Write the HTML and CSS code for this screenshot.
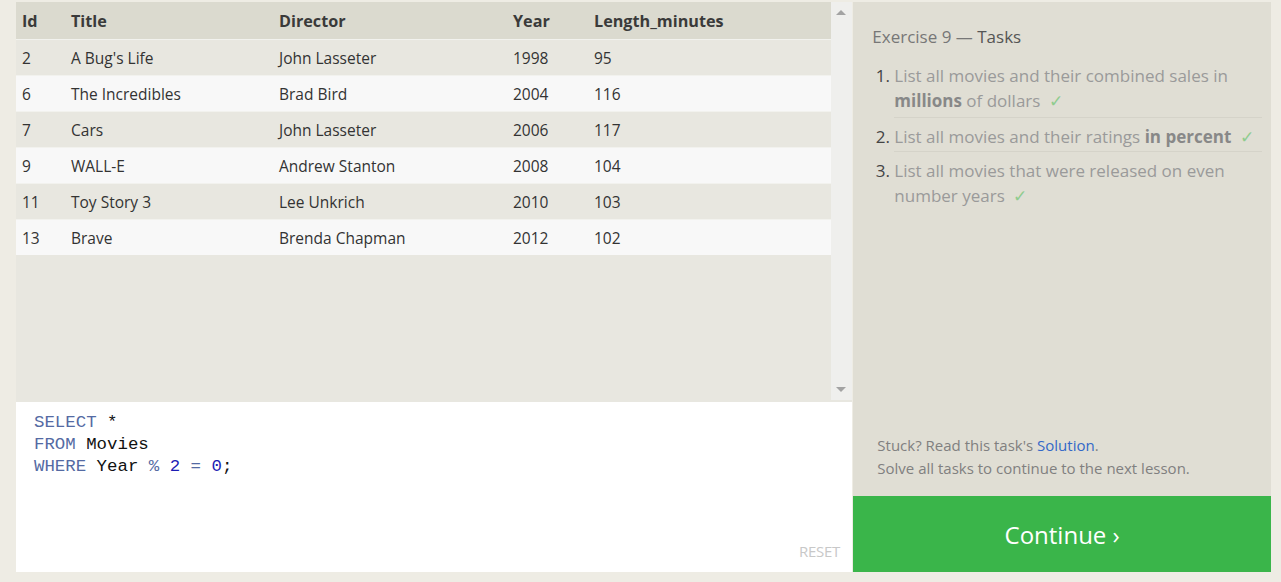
FILE: index.html
```html
<!DOCTYPE html>
<html lang="en">
<head>
<meta charset="utf-8">
<title>SQL Lesson</title>
<link rel="stylesheet" href="styles.css">
</head>
<body>
<div class="page">
  <div class="left">
    <div class="results">
      <div class="table-wrap">
        <table class="grid">
          <colgroup>
            <col class="c-id"><col class="c-title"><col class="c-dir"><col class="c-year"><col class="c-len">
          </colgroup>
          <thead>
            <tr><th>Id</th><th>Title</th><th>Director</th><th>Year</th><th>Length_minutes</th></tr>
          </thead>
          <tbody>
            <tr><td>2</td><td>A Bug's Life</td><td>John Lasseter</td><td>1998</td><td>95</td></tr>
            <tr><td>6</td><td>The Incredibles</td><td>Brad Bird</td><td>2004</td><td>116</td></tr>
            <tr><td>7</td><td>Cars</td><td>John Lasseter</td><td>2006</td><td>117</td></tr>
            <tr><td>9</td><td>WALL-E</td><td>Andrew Stanton</td><td>2008</td><td>104</td></tr>
            <tr><td>11</td><td>Toy Story 3</td><td>Lee Unkrich</td><td>2010</td><td>103</td></tr>
            <tr><td>13</td><td>Brave</td><td>Brenda Chapman</td><td>2012</td><td>102</td></tr>
          </tbody>
        </table>
      </div>
      <div class="scrollbar">
        <span class="arrow up"></span>
        <span class="arrow down"></span>
      </div>
    </div>
    <div class="editor">
      <pre class="code"><span class="kw">SELECT</span> *
<span class="kw">FROM</span> Movies
<span class="kw">WHERE</span> Year <span class="op">%</span> <span class="num">2</span> <span class="op">=</span> <span class="num">0</span>;</pre>
      <div class="reset">RESET</div>
    </div>
  </div>
  <div class="right">
    <div class="tasks">
      <h2 class="tasks-title">Exercise 9 — <span class="dark">Tasks</span></h2>
      <ol class="task-list">
        <li><span class="task-text">List all movies and their combined sales in <b>millions</b> of dollars</span> <span class="check">✓</span></li>
        <li><span class="task-text">List all movies and their ratings <b>in percent</b></span> <span class="check">✓</span></li>
        <li><span class="task-text">List all movies that were released on even number years</span> <span class="check">✓</span></li>
      </ol>
      <div class="help">
        <p>Stuck? Read this task's <a class="link">Solution</a>.</p>
        <p>Solve all tasks to continue to the next lesson.</p>
      </div>
    </div>
    <div class="continue">Continue ›</div>
  </div>
</div>
</body>
</html>
```
FILE: styles.css
```css
html, body {
  margin: 0;
  padding: 0;
  background: #eeece4;
  font-family: "Open Sans", "Noto Sans", sans-serif;
}

.page {
  display: flex;
  height: 582px;
  box-sizing: border-box;
  padding: 2px 10px 10px 16px;
}

.left {
  width: 837px;
  display: flex;
  flex-direction: column;
}

.results {
  display: flex;
  height: 400px;
  background: #e8e7e0;
}

.table-wrap {
  width: 815px;
}

.grid {
  width: 815px;
  border-collapse: collapse;
  table-layout: fixed;
  font-size: 15.5px;
  color: #333;
}

.c-id { width: 49px; }
.c-title { width: 208px; }
.c-dir { width: 234px; }
.c-year { width: 81px; }
.c-len { width: 243px; }

.grid th {
  background: #dbdacf;
  height: 37px;
  padding: 0 6px;
  text-align: left;
  font-weight: 700;
  font-size: 16.2px;
  color: #3a3a3a;
}

.grid td {
  height: 35px;
  padding: 0 6px;
  text-align: left;
  white-space: nowrap;
}

.grid tbody tr:nth-child(odd) td { background: #e8e7e0; }
.grid tbody tr:nth-child(even) td { background: #f8f8f8; }
.grid tbody tr td { border-top: 1px solid #f2f2ee; }

.scrollbar {
  width: 21px;
  height: 398px;
  background: #efefed;
  display: flex;
  flex-direction: column;
  justify-content: space-between;
  align-items: center;
  padding: 8px 0;
  box-sizing: border-box;
}

.arrow {
  width: 0;
  height: 0;
  border-left: 5px solid transparent;
  border-right: 5px solid transparent;
}
.arrow.up { border-bottom: 5px solid #a3a3a3; margin-left: -1px; }
.arrow.down { border-top: 5px solid #a3a3a3; margin-left: -1px; }

.editor {
  flex: 1;
  background: #fff;
  padding: 10px 18px;
  display: flex;
  flex-direction: column;
  justify-content: space-between;
  width: 836px;
  box-sizing: border-box;
}

.code {
  margin: 0;
  font-family: "Liberation Mono", "DejaVu Sans Mono", monospace;
  font-size: 17.4px;
  line-height: 22px;
  color: #111;
}

.kw { color: #546aa3; }
.op { color: #546aa3; }
.num { color: #1d1db4; }

.reset {
  align-self: flex-end;
  font-family: "Open Sans", sans-serif;
  font-size: 15px;
  color: #c8c8c8;
  margin-right: -6px;
  margin-bottom: 1px;
  letter-spacing: -0.3px;
}

.right {
  width: 418px;
  margin-left: 1px;
  background: #e0ded4;
  display: flex;
  flex-direction: column;
}

.tasks {
  flex: 1;
  padding: 24px 9px 16px 19px;
  display: flex;
  flex-direction: column;
}

.tasks-title {
  margin: 0 0 15px;
  font-size: 17px;
  font-weight: 400;
  color: #777;
  line-height: 22px;
}
.tasks-title .dark { color: #555; }

.task-list {
  margin: 0;
  padding-left: 22px;
  font-size: 17px;
  line-height: 25px;
  color: #9a9a9a;
}

.task-list li {
  color: #9a9a9a;
  padding: 0 0 4px;
  margin-bottom: 6px;
  border-bottom: 1px solid #d5d3c9;
}
.task-list li:nth-child(2) { padding-bottom: 2px; }
.task-list li:last-child { border-bottom: none; }
.task-list li::marker { color: #444; }
.task-list b { color: #888; font-weight: 700; }

.check {
  color: #8fcc8f;
  margin-left: 4px;
}

.help {
  margin-top: auto;
  font-size: 15px;
  line-height: 23px;
  color: #808080;
  padding-left: 5px;
}
.help p { margin: 0; }
.link { color: #3368c8; }

.continue {
  height: 76px;
  background: #3ab54a;
  color: #fff;
  font-size: 24px;
  display: flex;
  align-items: center;
  justify-content: center;
}
```
